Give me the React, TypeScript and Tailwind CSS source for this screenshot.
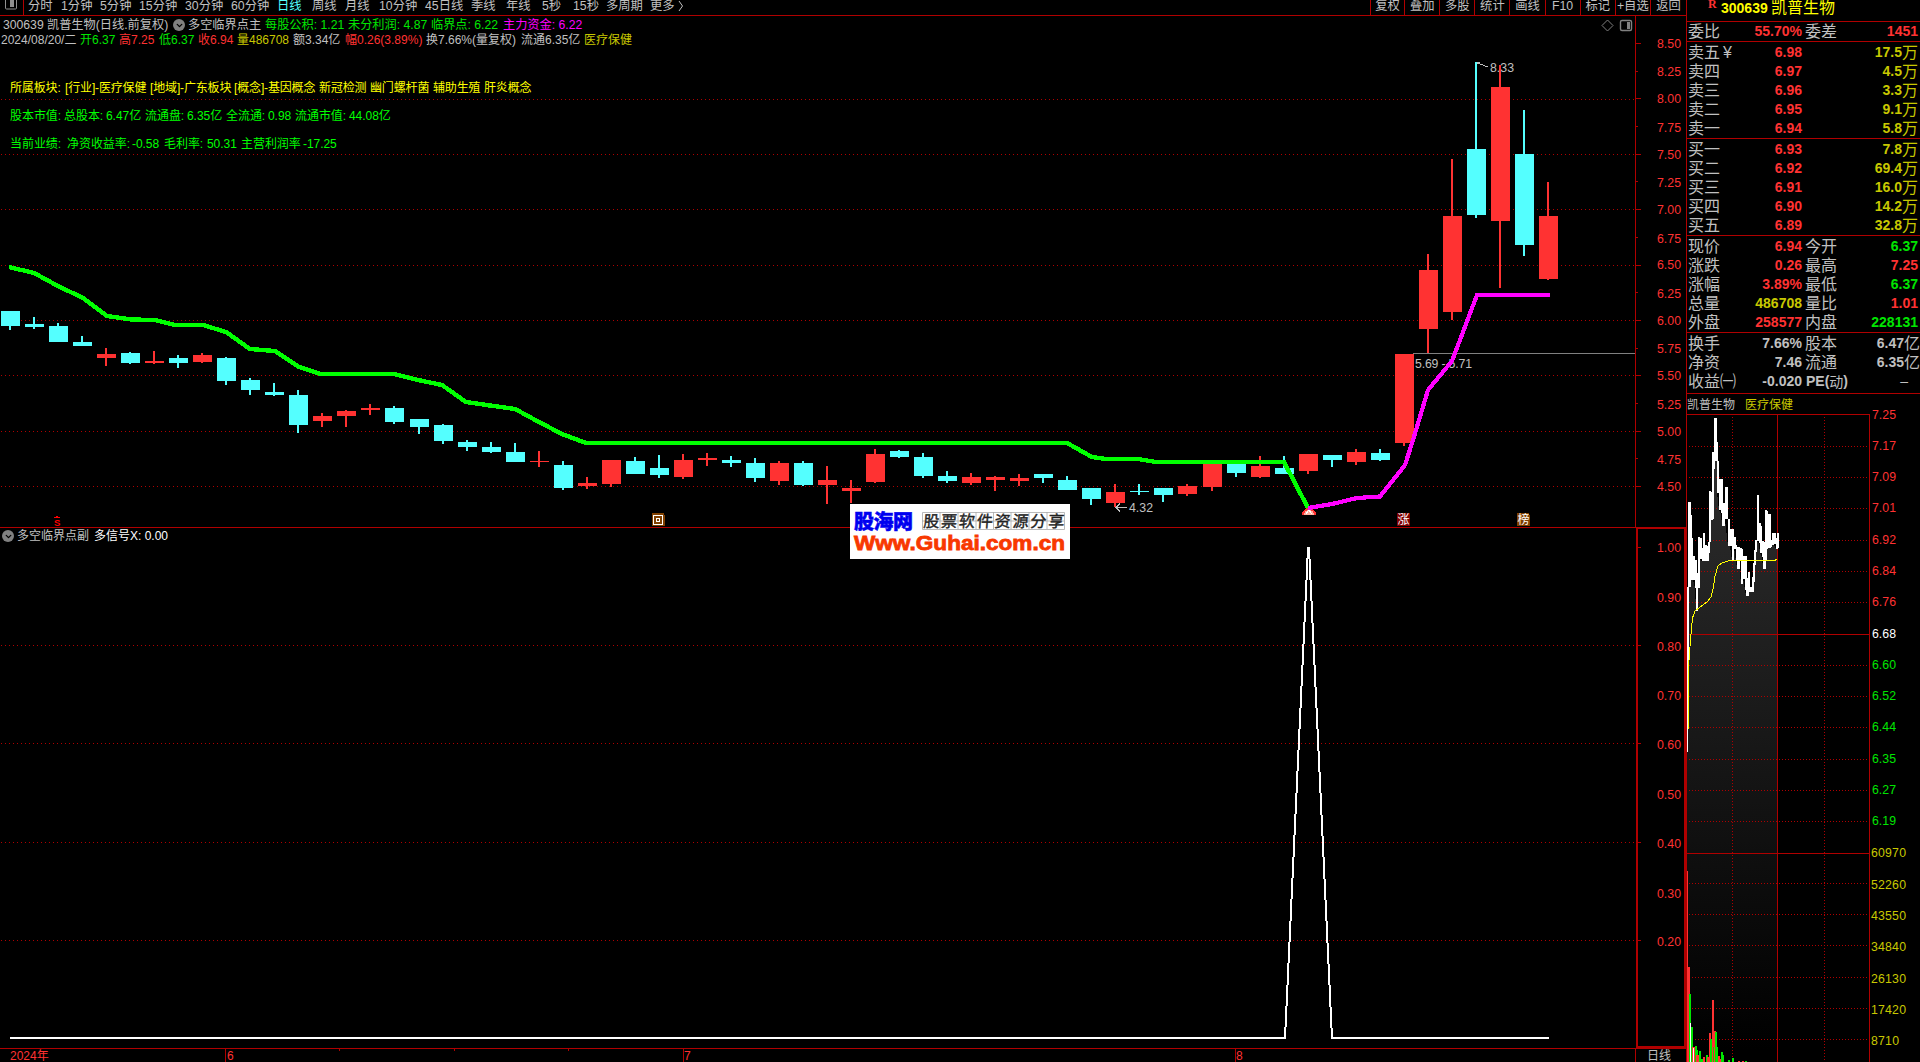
import { ChevronDown } from "lucide-react";

const RED = "#ff3232";
const CYAN = "#54ffff";
const LINE = "#b00000";

type Seg = [number, string, string?];

const periods: Seg[] = [
  [28, "分时"], [61, "1分钟"], [100, "5分钟"], [139, "15分钟"], [185, "30分钟"], [231, "60分钟"],
  [277, "日线", "text-[#54ffff]"], [312, "周线"], [345, "月线"], [379, "10分钟"], [425, "45日线"],
  [471, "季线"], [506, "年线"], [542, "5秒"], [573, "15秒"], [606, "多周期"], [650, "更多"],
];

const tools: [string, number][] = [
  ["复权", 34], ["叠加", 35], ["多股", 35], ["统计", 35], ["画线", 35], ["F10", 35], ["标记", 35], ["+自选", 35], ["返回", 36],
];

const quoteLine: Seg[] = [
  [1, "2024/08/20/二"], [80, "开6.37", "text-[#00e600]"], [119, "高7.25", "text-[#ff3232]"],
  [159, "低6.37", "text-[#00e600]"], [198, "收6.94", "text-[#ff3232]"], [237, "量486708", "text-[#c8c800]"],
  [293, "额3.34亿"], [345, "幅0.26(3.89%)", "text-[#ff3232]"], [426, "换7.66%(量复权)"],
  [521, "流通6.35亿"], [584, "医疗保健", "text-[#c8c800]"],
];

const blockLine: Seg[] = [
  [10, "所属板块:"], [65, "[行业]-医疗保健"], [150, "[地域]-广东板块"], [234, "[概念]-基因概念"],
  [319, "新冠检测"], [370, "幽门螺杆菌"], [433, "辅助生殖"], [484, "肝炎概念"],
];
const capLine: Seg[] = [
  [10, "股本市值:"], [64, "总股本:"], [106, "6.47亿"], [145, "流通盘:"], [187, "6.35亿"], [226, "全流通:"],
  [268, "0.98"], [295, "流通市值:"], [349, "44.08亿"],
];
const perfLine: Seg[] = [
  [10, "当前业绩:"], [67, "净资收益率:"], [132, "-0.58"], [164, "毛利率:"], [207, "50.31"], [241, "主营利润率"], [303, "-17.25"],
];

// up/down, high, body top, body bottom, low
const candles: [string, number, number, number, number][] = [
  ["d", 311, 311, 326, 330], ["d", 317, 324, 327, 329], ["d", 323, 326, 342, 342], ["d", 336, 342, 346, 346],
  ["u", 348, 354, 358, 366], ["d", 352, 353, 363, 364], ["u", 351, 361, 363, 364], ["d", 355, 358, 363, 368],
  ["u", 353, 355, 362, 363], ["d", 357, 358, 381, 385], ["d", 378, 380, 390, 395], ["d", 383, 392, 395, 396],
  ["d", 390, 395, 425, 433], ["u", 413, 416, 421, 427], ["u", 410, 411, 416, 427], ["u", 404, 408, 410, 415],
  ["d", 406, 408, 422, 424], ["d", 419, 419, 427, 434], ["d", 424, 425, 441, 444], ["d", 440, 442, 447, 451],
  ["d", 442, 447, 452, 453], ["d", 443, 452, 462, 462], ["u", 451, 461, 462, 467], ["d", 461, 465, 488, 490],
  ["u", 477, 483, 486, 489], ["u", 460, 460, 484, 487], ["d", 457, 461, 474, 474], ["d", 455, 468, 475, 478],
  ["u", 454, 460, 477, 479], ["u", 453, 458, 460, 466], ["d", 456, 460, 463, 467], ["d", 458, 463, 478, 482],
  ["u", 461, 463, 481, 485], ["d", 461, 463, 485, 486], ["u", 466, 480, 485, 504], ["u", 480, 488, 491, 503],
  ["u", 449, 454, 482, 483], ["d", 450, 451, 457, 458], ["d", 453, 457, 476, 478], ["d", 471, 476, 481, 483],
  ["u", 473, 477, 483, 485], ["u", 476, 477, 480, 491], ["u", 474, 478, 481, 486], ["d", 474, 474, 478, 483],
  ["d", 476, 480, 490, 490], ["d", 488, 488, 499, 505], ["u", 484, 492, 503, 507], ["d", 484, 491, 492, 495],
  ["d", 488, 488, 495, 502], ["u", 484, 486, 494, 496], ["u", 464, 464, 487, 491], ["d", 464, 464, 473, 477],
  ["u", 456, 466, 477, 478], ["d", 456, 468, 474, 474], ["u", 454, 454, 471, 474], ["d", 455, 455, 460, 467],
  ["u", 449, 452, 462, 465], ["d", 449, 453, 460, 461], ["u", 354, 354, 443, 446], ["u", 254, 270, 329, 353],
  ["u", 159, 216, 312, 320], ["d", 62, 149, 215, 218], ["u", 65, 87, 221, 288], ["d", 110, 154, 245, 256],
  ["u", 182, 216, 279, 280],
];

const greenPts =
  "9,267 34,273 58,286 83,298 107,316 131,319.5 155,320 175,325 203,325 226,332 250,349 275,351 299,367 321,374 394,374 418,380 442,385 466,402 490,405.5 515,409 539,422 562,434 586,443 1067,443 1092,457 1106,459 1138,459 1156,462 1284,462 1308,508";
const pinkPts =
  "1308,508 1332,504 1357,498 1380,496.5 1405,465 1413,440 1428,390 1452,361 1477,295 1550,295";

const majors = [99, 154, 209, 265, 320, 375, 431, 486];

// minute chart strokes: x1, x2, y1, y2 in thirds of a pixel from the chart origin
const ticks: [number, number, number, number][] = [
  [141, 147, 590, 830], [141, 144, 830, 1085], [144, 153, 336, 590], [150, 156, 375, 445], [153, 159, 445, 570],
  [159, 165, 498, 570], [165, 170, 510, 593], [168, 174, 593, 663], [170, 180, 548, 593], [174, 180, 440, 593],
  [180, 185, 443, 507], [185, 190, 475, 513], [189, 195, 430, 513], [195, 201, 465, 513], [201, 206, 467, 513],
  [205, 210, 455, 487], [207, 213, 303, 457], [213, 219, 305, 388], [216, 222, 185, 385], [222, 225, 85, 237],
  [225, 231, 85, 213], [231, 234, 155, 213], [231, 237, 213, 308], [237, 243, 268, 362], [243, 249, 268, 370],
  [246, 255, 340, 408], [255, 264, 290, 387], [264, 270, 387, 468], [270, 276, 418, 468], [276, 282, 418, 512],
  [282, 288, 440, 475], [288, 291, 466, 512], [291, 299, 470, 536], [297, 305, 475, 513], [303, 309, 478, 583],
  [309, 318, 497, 565], [315, 321, 497, 600], [318, 326, 565, 618], [324, 330, 545, 600], [327, 338, 592, 606],
  [336, 342, 562, 606], [340, 345, 518, 575], [342, 348, 480, 525], [346, 352, 450, 485], [350, 357, 315, 453],
  [356, 362, 400, 460], [360, 366, 408, 488], [366, 372, 453, 500], [369, 378, 455, 537], [375, 381, 360, 510],
  [381, 384, 362, 475], [384, 393, 373, 475], [390, 396, 450, 470], [396, 402, 430, 466], [402, 408, 430, 463],
  [408, 414, 445, 477], [412, 417, 430, 475],
];

const volumes: [number, number, number, string][] = [
  [141, 144, 453, RED], [144, 150, 741, RED], [147, 153, 822, "#00e600"], [153, 159, 921, "#00e600"],
  [150, 153, 910, "#fff"], [156, 162, 982, RED], [159, 162, 984, "#fff"], [162, 165, 980, RED],
  [165, 171, 978, "#00e600"], [170, 174, 990, "#00e600"], [168, 177, 1005, RED], [177, 183, 993, "#00e600"],
  [183, 189, 1018, "#00e600"], [189, 195, 1010, RED], [198, 204, 1005, "#00e600"], [201, 207, 1012, RED],
  [207, 213, 939, RED], [210, 216, 957, "#00e600"], [216, 222, 840, RED], [219, 225, 980, "#00e600"],
  [222, 228, 933, RED], [225, 231, 936, "#00e600"], [231, 234, 980, "#00e600"], [234, 240, 1008, RED],
  [237, 243, 1016, RED], [243, 249, 996, "#00e600"], [248, 252, 1005, "#00e600"], [264, 270, 1020, "#00e600"],
  [276, 282, 1014, "#00e600"], [294, 300, 1023, RED], [306, 312, 1023, RED], [315, 321, 1023, "#00e600"],
];

const minuteLabels: [number, string, string][] = [
  [415, "7.25", RED], [446, "7.17", RED], [477, "7.09", RED], [508, "7.01", RED], [540, "6.92", RED], [571, "6.84", RED],
  [602, "6.76", RED], [634, "6.68", "#fff"], [665, "6.60", "#00e600"], [696, "6.52", "#00e600"], [727, "6.44", "#00e600"],
  [759, "6.35", "#00e600"], [790, "6.27", "#00e600"], [821, "6.19", "#00e600"],
];
const volLabels: [number, string][] = [
  [853, "60970"], [885, "52260"], [916, "43550"], [947, "34840"], [979, "26130"], [1010, "17420"], [1041, "8710"],
];

function SegLine({ items, className }: { items: Seg[]; className: string }) {
  return (
    <div className={`flex whitespace-pre ${className}`} style={{ paddingLeft: items[0][0] }}>
      {items.map(([x, text, color], i) => (
        <span
          key={i}
          className={`shrink-0 ${color || ""}`}
          style={{ width: i < items.length - 1 ? items[i + 1][0] - x : undefined }}
        >
          {text}
        </span>
      ))}
    </div>
  );
}

function FoldIcon() {
  return (
    <span className="flex size-3 shrink-0 items-center justify-center rounded-full bg-[#808080]">
      <ChevronDown size={9} strokeWidth={3.5} color="#000" />
    </span>
  );
}

function Toolbar() {
  return (
    <div className="flex h-4 border-b border-[#b00000] text-[12.3px] leading-[11px] text-[#c0c0c0]">
      <div className="flex w-6 shrink-0 justify-end border-r border-[#b00000] pr-1.5">
        <svg width="12" height="10" className="shrink-0">
          <rect x="0.5" y="-3" width="11" height="12" rx="1" fill="none" stroke="#909090" />
          <rect x="5" y="0" width="4" height="7" fill="#909090" />
        </svg>
      </div>
      <div className="flex">
        <SegLine items={periods.map(([x, t, c]) => [x - 24, t, c] as Seg)} className="leading-[12px]" />
        <svg width="8" height="12" className="ml-0.5">
          <path d="M2 1L5.5 6L2 11" fill="none" stroke="#c0c0c0" />
        </svg>
      </div>
      <div className="ml-auto flex">
        {tools.map(([t, w]) => (
          <div key={t} className="border-l border-[#b00000] text-center leading-[12px] whitespace-nowrap" style={{ width: w + 0.11 }}>
            {t}
          </div>
        ))}
      </div>
    </div>
  );
}

function MainChart() {
  return (
    <div className="relative h-[511px]">
      <svg width="1686" height="511" viewBox="0 16 1686 511" className="block" shapeRendering="crispEdges">
        {majors.map((y) => (
          <line key={y} x1="1" x2="1635" y1={y + 0.5} y2={y + 0.5} stroke={LINE} strokeDasharray="1 3" />
        ))}
        <line x1="1635.5" x2="1635.5" y1="16" y2="527" stroke={LINE} />
        {Array.from({ length: 17 }, (_, i) => {
          const y = 43.5 + i * 27.69;
          return (
            <g key={i}>
              <line x1="1636" x2={i % 2 ? 1638 : 1641} y1={Math.floor(y) + 0.5} y2={Math.floor(y) + 0.5} stroke={LINE} />
              <text x="1657" y={Math.round(y + (i % 2 ? 5.2 : 4.4))} fill={RED} textLength="24">
                {(8.5 - i * 0.25).toFixed(2)}
              </text>
            </g>
          );
        })}
        <g fill="#c0c0c0">
          <text x="1490" y="72" textLength="24">8.33</text>
          <text x="1415" y="368" textLength="57">5.69 - 5.71</text>
          <text x="1129" y="512" textLength="24">4.32</text>
        </g>
        <path d="M1476 62.5L1488 67M1475 68V62.5H1480M1116 507.5H1127M1120 503.5L1116 507.5L1120 511.5" fill="none" stroke="#c0c0c0" />
        <line x1="1413" x2="1635" y1="353.5" y2="353.5" stroke="#808080" />
        {candles.map(([dir, hi, top, bot, lo], i) => {
          const cx = Math.round(10 + i * 24.03);
          const fill = dir === "u" ? RED : CYAN;
          return (
            <g key={i} fill={fill}>
              <rect x={cx - 1} y={hi} width="2" height={lo - hi} />
              <rect x={cx - 9} y={top} width="19" height={bot - top} />
            </g>
          );
        })}
        <polyline points={greenPts} fill="none" stroke="#00ff00" strokeWidth="4.4" />
        <g>
          <path d="M1302 515A7 7 0 0 1 1316 515Z" fill={RED} />
          <path d="M1304 515A5 5 0 0 1 1314 515Z" fill="#ffb0a0" />
          <path d="M1306 514L1309 510L1312 514" fill="none" stroke="#fff" />
        </g>
        <polyline points={pinkPts} fill="none" stroke="#ff00ff" strokeWidth="4.2" />
        <path d="M54 517.5H60M56 516.5H58" stroke="#ff0000" />
        <text x="54" y="526" fill="#ff0000" fontSize="9.5" fontWeight="bold">S</text>
        <g>
          <path d="M652 513H664V515H665V526H652Z" fill="#804000" />
          <rect x="653.5" y="515.5" width="9" height="9" fill="none" stroke="#fff" />
          <rect x="656.5" y="518.5" width="3" height="3" fill="none" stroke="#fff" />
          <path d="M1397 513H1410V526H1397Z" fill="#800000" />
          <path d="M1517 513H1529V515H1530V526H1517Z" fill="#804000" />
          <text x="1397.5" y="524" fontSize="12" fill="#fff">涨</text>
          <text x="1517.5" y="524" fontSize="12" fill="#fff">榜</text>
        </g>
        <g shapeRendering="auto" fill="none" stroke="#808080">
          <path d="M1607.5 20L1613 25.5L1607.5 31L1602 25.5Z" />
          <rect x="1620.5" y="20.5" width="11" height="10" rx="1.5" strokeWidth="1.4" />
          <rect x="1627" y="22" width="3" height="7" fill="#808080" stroke="none" />
        </g>
      </svg>
      <div className="absolute top-0 left-0 text-[12px] leading-[14px] text-[#c0c0c0]">
        <div className="mt-[2px] flex h-[14px] items-center pl-[3px] text-[12.2px] whitespace-pre">
          <span className="w-11 shrink-0">300639</span>
          <span className="w-[126px] shrink-0">凯普生物(日线.前复权)</span>
          <FoldIcon />
          <span className="ml-[3px] w-[77px] shrink-0">多空临界点主</span>
          <span className="w-[83px] shrink-0 text-[#00e600]">每股公积: 1.21</span>
          <span className="w-[83px] shrink-0 text-[#00e600]">未分利润: 4.87</span>
          <span className="w-[72px] shrink-0 text-[#00e600]">临界点: 6.22</span>
          <span className="text-[#ff00ff]">主力资金: 6.22</span>
        </div>
        <SegLine items={quoteLine} className="mt-px" />
        <SegLine items={blockLine} className="mt-[34px] tracking-[-0.15px] text-[#ffff00]" />
        <SegLine items={capLine} className="mt-[14px] tracking-[-0.05px] text-[#00ff00]" />
        <SegLine items={perfLine} className="mt-[14px] tracking-[-0.05px] text-[#00ff00]" />
      </div>
      {/* site banner sits over both panes */}
      <div className="absolute top-[488px] left-[850px] z-10 h-[55px] w-[220px] bg-white">
        <svg width="220" height="55" viewBox="0 0 220 55">
          <text x="4" y="25" fontSize="20" fontWeight="900" fill="#0000f0" stroke="#0000f0" strokeWidth="0.5" textLength="59">股海网</text>
          <path
            d="M72.5 8.5H214.5V25.5H72.5ZM72 17H214M90 8V25M108 8V25M126 8V25M143.5 8V25M161 8V25M179 8V25M197 8V25"
            fill="none"
            stroke="#a8a8a8"
            strokeWidth="0.8"
          />
          <text x="73" y="23" fontSize="16" fill="#222" stroke="#222" strokeWidth="0.4" textLength="141" transform="skewX(-4) translate(1.5 0)">
            股票软件资源分享
          </text>
          <text x="4" y="46" fontSize="20.5" fontWeight="bold" fill="#f83800" stroke="#f83800" strokeWidth="0.8" textLength="211" lengthAdjust="spacingAndGlyphs">
            Www.Guhai.com.cn
          </text>
        </svg>
      </div>
    </div>
  );
}

function SubChart() {
  return (
    <div className="relative h-[521px]">
      <svg width="1686" height="521" viewBox="0 527 1686 521" className="block" shapeRendering="crispEdges">
        <line x1="0" x2="1686" y1="527.5" y2="527.5" stroke={LINE} />
        {[645, 743, 842, 940].map((y) => (
          <line key={y} x1="1" x2="1635" y1={y + 0.5} y2={y + 0.5} stroke={LINE} strokeDasharray="1 3" />
        ))}
        <path d="M1686 528H1636.5M1637 527V1048M1685 527V1047H1637" fill="none" stroke={LINE} strokeWidth="2" />
        {[547, 597, 646, 695, 744, 794, 843, 893, 941].map((y, i) => (
          <text key={y} x="1657" y={y + 5} fill={RED} textLength="24">
            {(1 - i / 10).toFixed(2)}
          </text>
        ))}
        {[547, 645, 743, 842, 940].map((y) => (
          <line key={y} x1="1638" x2="1641" y1={y + 0.5} y2={y + 0.5} stroke={LINE} />
        ))}
        <polyline points="10,1038 1285,1038 1308,548 1309,548 1332,1038 1549,1038" fill="none" stroke="#fff" strokeWidth="2" />
      </svg>
      <div className="absolute top-0.5 left-0 flex h-[14px] items-center pl-0.5 text-[12px] leading-[14px] whitespace-pre text-[#c0c0c0]">
        <FoldIcon />
        <span className="ml-[3px] w-[77px]">多空临界点副</span>
        <span className="text-white">多信号X: 0.00</span>
      </div>
    </div>
  );
}

function TimeAxis() {
  return (
    <svg width="1686" height="14" viewBox="0 1048 1686 14" className="block" shapeRendering="crispEdges">
      <path d="M0 1048.5H1686M225.5 1048V1062M683.5 1048V1062M1235.5 1048V1062M1635.5 1048V1062" stroke={LINE} />
      <path d="M339.5 1048V1051M454.5 1048V1051M568.5 1048V1051" stroke={LINE} />
      <g fill={RED} fontSize="12">
        <text x="10" y="1060">2024年</text>
        <text x="227" y="1060">6</text>
        <text x="684" y="1060">7</text>
        <text x="1236" y="1060">8</text>
      </g>
      <text x="1647" y="1060" fontSize="12" fill="#c0c0c0">日线</text>
    </svg>
  );
}

function BookRow({ label, mark, price, vol, unit = "万" }: { label: string; mark?: string; price: string; vol: string; unit?: string }) {
  return (
    <div className="flex h-[19px] items-center pr-[2px] pl-px leading-[19px]">
      <span className="w-[35px] text-base text-[#c0c0c0]">{label}</span>
      <span className="w-4 text-base text-[#c0c0c0]">{mark}</span>
      <b className="w-[63px] text-right text-[#ff3232]">{price}</b>
      <b className="flex-1 text-right text-[#c8c800]">{vol}</b>
      <span className="text-base text-[#c8c800]">{unit}</span>
    </div>
  );
}

function StatRow({ a, av, ac, b, bv, bc, unit }: { a: string; av: string; ac: string; b: string; bv: string; bc: string; unit?: string }) {
  return (
    <div className="flex h-[19px] items-center pl-px leading-[19px] whitespace-nowrap">
      <span className="w-[51px] text-base text-[#c0c0c0]">{a}</span>
      <b className={`w-[63px] text-right ${ac}`}>{av}</b>
      <span className="ml-[3px] w-10 text-base text-[#c0c0c0]">{b}</span>
      <b className={`flex-1 text-right ${bc} ${unit ? "" : "pr-[2px]"}`}>{bv}</b>
      {unit && <span className="text-base text-[#c0c0c0]">{unit}</span>}
    </div>
  );
}

const R = "text-[#ff3232]";
const G = "text-[#00e600]";
const Y = "text-[#c8c800]";
const W = "text-[#c0c0c0]";

function MinuteChart() {
  const px = (v: number) => 1640 + v / 3;
  const py = (v: number) => 390 + v / 3;
  const area = ticks.map(([a, , , y2]) => `${px(a)},${py(Math.min(y2, 663))}`).join(" ");
  return (
    <svg width="234" height="648" viewBox="1686 414 234 648" className="block overflow-visible" shapeRendering="crispEdges">
      <defs>
        <linearGradient id="fade" gradientUnits="userSpaceOnUse" x1="0" y1="420" x2="0" y2="1050">
          <stop offset="0" stopColor="#303030" />
          <stop offset="1" stopColor="#000" />
        </linearGradient>
      </defs>
      <polygon points={`1687,1062 ${area} 1777,540 1777,1062`} fill="url(#fade)" />
      {[446, 477, 508, 540, 571, 602, 665, 696, 727, 759, 790, 821, 883, 914, 945, 977, 1008, 1039].map((y) => (
        <line key={y} x1="1689" x2="1868" y1={y + 0.5} y2={y + 0.5} stroke={LINE} strokeDasharray="1 2" />
      ))}
      <path d="M1732.5 417V1062M1824.5 417V1062" stroke={LINE} strokeDasharray="1 2" />
      <path d="M1687 414.5H1869.5V1062M1777.5 414V1062M1687 634.5H1869M1687 853.5H1869" fill="none" stroke={LINE} />
      {ticks.map(([a, b, y1, y2], i) => (
        <rect key={i} x={Math.round(px(a))} y={Math.round(py(y1))} width={Math.max(1, Math.round((b - a) / 3))} height={Math.round((y2 - y1) / 3)} fill="#fff" />
      ))}
      <polyline
        points="1688.5,729 1688.5,667 1690.5,640 1692.5,618 1695,611 1699,608 1703,605 1708,601 1711,597 1713.5,587 1715,576 1718,566 1722,563 1729,560.5 1774,560.5 1777,559.5"
        fill="none"
        stroke="#ffff00"
      />
      {volumes.map(([a, b, y, c], i) => (
        <rect key={i} x={Math.round(px(a))} y={Math.round(720 + y / 3)} width={Math.round((b - a) / 3)} height={Math.round(342 - y / 3)} fill={c} />
      ))}
      <line x1="1686.5" x2="1686.5" y1="414" y2="1062" stroke={LINE} />
      {minuteLabels.map(([y, t, c]) => (
        <text key={t} x="1872" y={y + 4} fill={c} fontSize="12.3" textLength="24">{t}</text>
      ))}
      {volLabels.map(([y, t]) => (
        <text key={t} x="1871" y={y + 4} fill="#c8c800" fontSize="12.3" textLength={t.length * 7}>{t}</text>
      ))}
    </svg>
  );
}

function QuotePanel() {
  return (
    <div className="w-[234px] shrink-0 border-l border-[#b00000] text-sm">
      <div className="flex h-[21px] pl-[21px] leading-[16px] text-[#ffff00]">
        <b className="w-[13px] font-['Liberation_Serif'] text-xs leading-[9px] text-[#ff3232]">R</b>
        <b className="w-[50px]">300639</b>
        <span className="text-base leading-[16px]">凯普生物</span>
      </div>
      <div className="h-5 border-t border-[#b00000]">
        <StatRow a="委比" av="55.70%" ac={R} b="委差" bv="1451" bc={R} />
      </div>
      <div className="h-[97px] border-t border-[#b00000] pt-px">
        <BookRow label="卖五" mark="¥" price="6.98" vol="17.5" />
        <BookRow label="卖四" price="6.97" vol="4.5" />
        <BookRow label="卖三" price="6.96" vol="3.3" />
        <BookRow label="卖二" price="6.95" vol="9.1" />
        <BookRow label="卖一" price="6.94" vol="5.8" />
      </div>
      <div className="h-[97px] border-t border-[#b00000] pt-px">
        <BookRow label="买一" price="6.93" vol="7.8" />
        <BookRow label="买二" price="6.92" vol="69.4" />
        <BookRow label="买三" price="6.91" vol="16.0" />
        <BookRow label="买四" price="6.90" vol="14.2" />
        <BookRow label="买五" price="6.89" vol="32.8" />
      </div>
      <div className="h-[97px] border-t border-[#b00000] pt-px">
        <StatRow a="现价" av="6.94" ac={R} b="今开" bv="6.37" bc={G} />
        <StatRow a="涨跌" av="0.26" ac={R} b="最高" bv="7.25" bc={R} />
        <StatRow a="涨幅" av="3.89%" ac={R} b="最低" bv="6.37" bc={G} />
        <StatRow a="总量" av="486708" ac={Y} b="量比" bv="1.01" bc={R} />
        <StatRow a="外盘" av="258577" ac={R} b="内盘" bv="228131" bc={G} />
      </div>
      <div className="h-[61px] border-t border-[#b00000] pt-px">
        <StatRow a="换手" av="7.66%" ac={W} b="股本" bv="6.47" bc={W} unit="亿" />
        <StatRow a="净资" av="7.46" ac={W} b="流通" bv="6.35" bc={W} unit="亿" />
        <div className="flex h-[19px] items-center pl-px leading-[19px] whitespace-nowrap text-[#c0c0c0]">
          <span className="w-8 text-base">收益</span>
          <span className="w-[19px] text-base tracking-[-3px]">㈠</span>
          <b className="w-[63px] text-right">-0.020</b>
          <b className="ml-1">PE(</b>
          <span className="text-sm">动</span>
          <b>)</b>
          <span className="flex-1 pr-3 text-right">–</span>
        </div>
      </div>
      <div className="flex h-[21px] items-center border-t border-[#b00000] pt-[2px] text-[12px] leading-[16px]">
        <span className="w-[58px] text-[#c0c0c0]">凯普生物</span>
        <span className="text-[#c8c800]">医疗保健</span>
      </div>
      <div className="-ml-px">
        <MinuteChart />
      </div>
    </div>
  );
}

export default function App() {
  return (
    <div className="flex h-[1062px] w-[1920px] overflow-hidden bg-black font-['Liberation_Sans','Noto_Sans_CJK_SC',sans-serif] text-[12.3px]">
      <div className="w-[1686px] shrink-0">
        <Toolbar />
        <MainChart />
        <SubChart />
        <TimeAxis />
      </div>
      <QuotePanel />
    </div>
  );
}
